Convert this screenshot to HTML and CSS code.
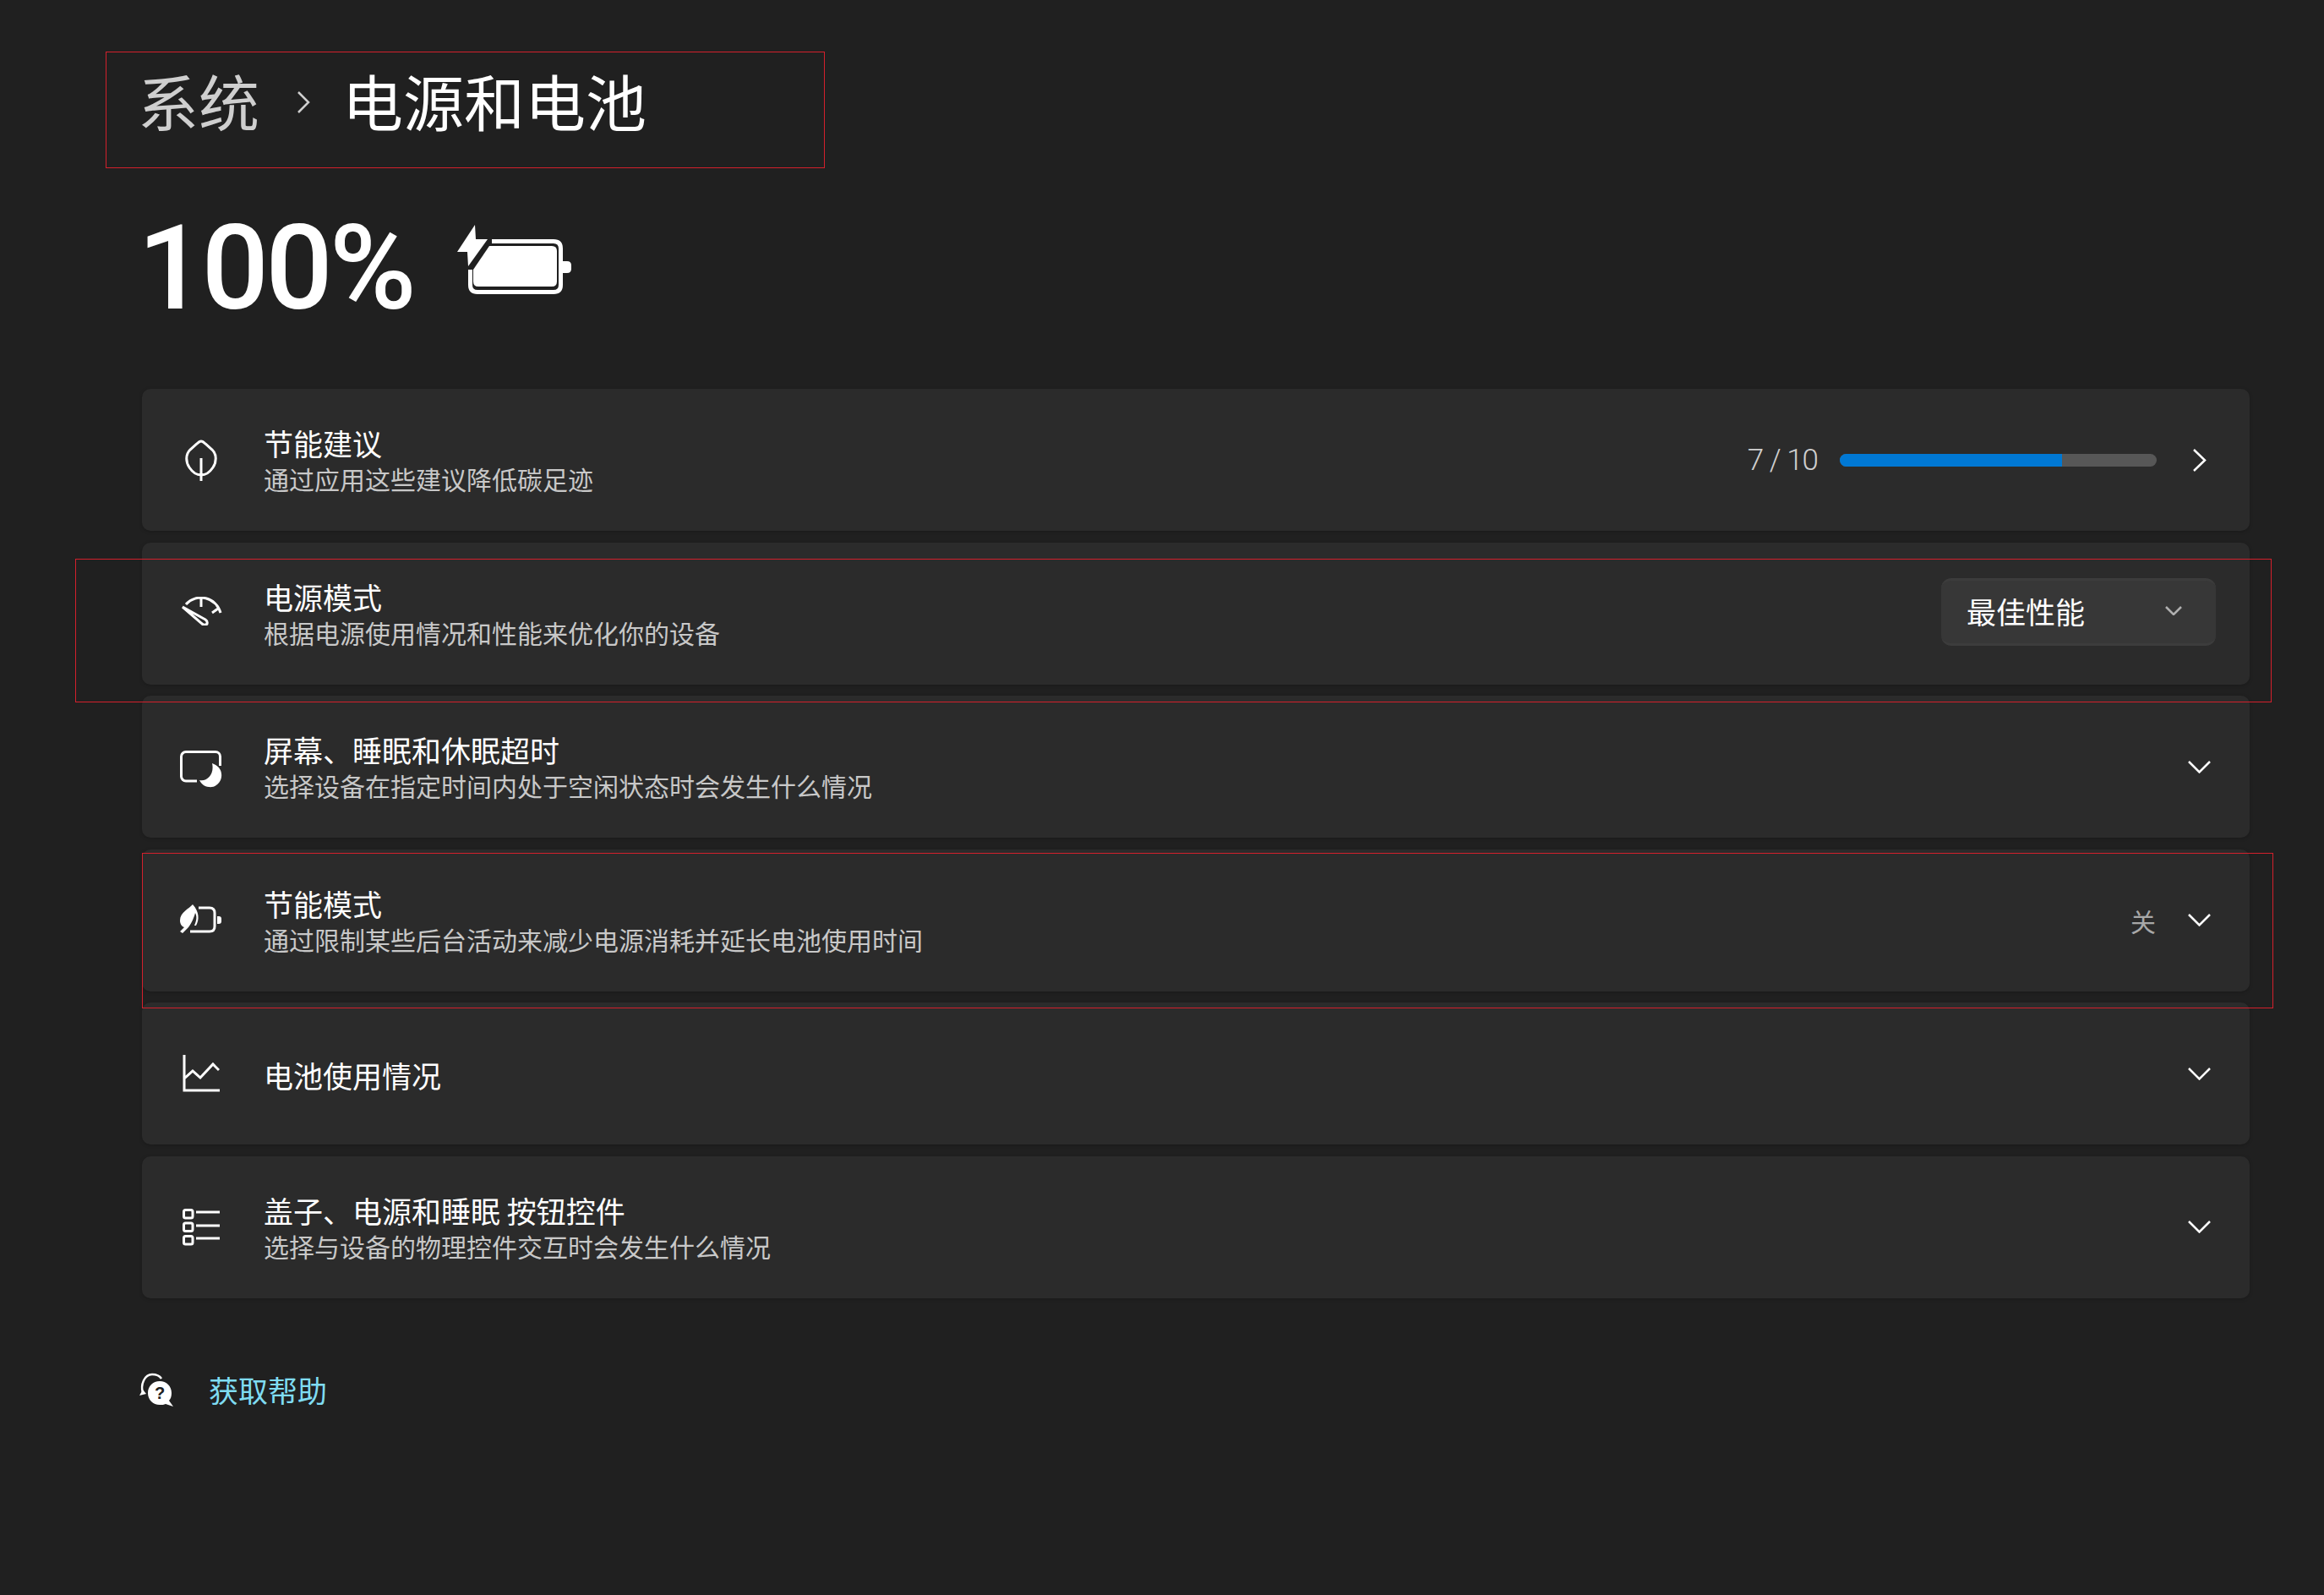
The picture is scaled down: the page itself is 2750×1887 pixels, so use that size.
FILE: index.html
```html
<!DOCTYPE html>
<html lang="zh-CN">
<head>
  <meta charset="UTF-8" />
  <title>电源和电池</title>
  <link rel="stylesheet" href="styles.css">
</head>
<body>

  <div class="page">
    <!-- Breadcrumb -->
    <div class="breadcrumb">
      <span class="crumb-parent">系统</span>
      <svg class="crumb-arrow" viewBox="0 0 16 26"><path d="M2 1 L14 13 L2 25" /></svg>
      <span class="crumb-current">电源和电池</span>
    </div>

    <!-- Battery level -->
    <div class="level">
      <span class="level-value">100%</span>
      <svg class="level-icon" viewBox="0 0 135 82">
        <path class="fill" d="M21 0 L0 32 H12 L13 49 L36 17 H22 Z" />
        <path class="line5" d="M41 19.5 H114 Q122.5 19.5 122.5 28 V71 Q122.5 79.5 114 79.5 H24 Q15.5 79.5 15.5 71 V53" />
        <path class="fill" d="M38 25 H112 Q118 25 118 31 V67 Q118 73 112 73 H25 Q19 73 19 67 V53 Z" />
        <path class="fill" d="M125 43 H130 Q135 43 135 48 V52 Q135 57 130 57 H125 Z" />
      </svg>
    </div>

    <!-- Settings rows -->
    <div class="cards">
      <div class="card">
        <div class="card-icon">
          <svg class="icon-leaf" viewBox="0 0 38 49">
            <path class="line" d="M19 2 C17 2 16 3 14 5 L6 12 C0 18 1 27 5 33 C9 39 14 42 19 42 C24 42 29 39 33 33 C37 27 38 18 32 12 L24 5 C22 3 21 2 19 2 Z M19 22 V49" />
          </svg>
        </div>
        <div class="card-text">
          <div class="card-title">节能建议</div>
          <div class="card-sub">通过应用这些建议降低碳足迹</div>
        </div>
        <div class="card-right">
          <span class="count">7 / 10</span>
          <div class="progress"><div class="progress-bar" style="width: 70%"></div></div>
          <svg class="arrow-right" viewBox="0 0 27 27"><path d="M7 1 L20 13.500 L7 26" /></svg>
        </div>
      </div>

      <div class="card">
        <div class="card-icon">
          <svg class="icon-gauge" viewBox="0 0 50 34">
            <path class="line" d="M7 9 A24 24 0 0 1 48 19 M25 1 V12 M38 19 L45 14" />
            <path class="line" d="M3 12 L30 27 C33 29 33 33 30 33 C28 34 27 33 25 31 Z" />
          </svg>
        </div>
        <div class="card-text">
          <div class="card-title">电源模式</div>
          <div class="card-sub">根据电源使用情况和性能来优化你的设备</div>
        </div>
        <div class="card-right">
          <div class="dropdown">
            <span>最佳性能</span>
            <svg class="dropdown-arrow" viewBox="0 0 20 11"><path d="M1 1 L10 10 L19 1" /></svg>
          </div>
        </div>
      </div>

      <div class="card">
        <div class="card-icon">
          <svg class="icon-screen" viewBox="0 0 50 44">
            <path class="line" d="M20 36 H7 A5.500 5.500 0 0 1 1.500 30.500 V7 A5.500 5.500 0 0 1 7 1.500 H42 A5.500 5.500 0 0 1 47.500 7 V18" />
            <path class="fill" d="M38 15 C46 18 50 24 49 31 C48 39 41 44 34 43 C29 43 25 39 23 35 C32 37 41 28 38 15 Z" />
          </svg>
        </div>
        <div class="card-text">
          <div class="card-title">屏幕、睡眠和休眠超时</div>
          <div class="card-sub">选择设备在指定时间内处于空闲状态时会发生什么情况</div>
        </div>
        <div class="card-right">
          <svg class="arrow-down" viewBox="0 0 27 15"><path d="M1 1 L13.500 13.500 L26 1" /></svg>
        </div>
      </div>

      <div class="card">
        <div class="card-icon">
          <svg class="icon-saver" viewBox="0 0 50 34">
            <path class="fill" d="M15 0 C11 5 0 9 0 19 C0 23 2 26 5 27 L0 32 L3 34 L10 27 C14 22 17 14 18 10 C20 14 20 18 17 25 L19 25 C23 18 23 9 15 0 Z" />
            <path class="line" d="M22 4 H35 Q41 4 41 10 V26 Q41 32 35 32 H12" />
            <path class="fill" d="M44 14 H46 Q49 14 49 17 V20 Q49 23 46 23 H44 Z" />
          </svg>
        </div>
        <div class="card-text">
          <div class="card-title">节能模式</div>
          <div class="card-sub">通过限制某些后台活动来减少电源消耗并延长电池使用时间</div>
        </div>
        <div class="card-right">
          <span class="state">关</span>
          <svg class="arrow-down" viewBox="0 0 27 15"><path d="M1 1 L13.500 13.500 L26 1" /></svg>
        </div>
      </div>

      <div class="card">
        <div class="card-icon">
          <svg class="icon-chart" viewBox="0 0 44 44">
            <path class="line" d="M2 0 V42 H44 M2 28 L12 19 L21 27 L36 11 L43 18" />
          </svg>
        </div>
        <div class="card-text">
          <div class="card-title">电池使用情况</div>
        </div>
        <div class="card-right">
          <svg class="arrow-down" viewBox="0 0 27 15"><path d="M1 1 L13.500 13.500 L26 1" /></svg>
        </div>
      </div>

      <div class="card">
        <div class="card-icon">
          <svg class="icon-list" viewBox="0 0 44 44">
            <rect class="line" x="1.500" y="1.500" width="10.500" height="9.500" rx="2" />
            <rect class="line" x="1.500" y="17" width="10.500" height="9.500" rx="2" />
            <rect class="line" x="1.500" y="32.500" width="10.500" height="9.500" rx="2" />
            <path class="line" d="M16 4 H44 M16 20 H44 M16 35 H44" />
          </svg>
        </div>
        <div class="card-text">
          <div class="card-title">盖子、电源和睡眠 按钮控件</div>
          <div class="card-sub">选择与设备的物理控件交互时会发生什么情况</div>
        </div>
        <div class="card-right">
          <svg class="arrow-down" viewBox="0 0 27 15"><path d="M1 1 L13.500 13.500 L26 1" /></svg>
        </div>
      </div>
    </div>

    <!-- Help link -->
    <div class="help">
      <svg class="help-icon" viewBox="0 0 40 40">
        <path class="line2" d="M4 24 C1 14 6 2 15 2 C20 2 24 4 26 7" />
        <path class="fill" d="M0 27 L8 25 L4 20 Z" />
        <path class="fill" d="M24 10 C32 10 38 16 38 24 C38 28 37 31 35 33 L40 40 L31 37 C29 38 27 38 24 38 C16 38 10 32 10 24 C10 16 16 10 24 10 Z" />
        <text class="help-mark" x="24" y="31">?</text>
      </svg>
      <span class="help-text">获取帮助</span>
    </div>

    <!-- Red annotation frames -->
    <div class="mark mark-title"></div>
    <div class="mark mark-mode"></div>
    <div class="mark mark-saver"></div>
  </div>

</body>
</html>
```

FILE: styles.css
```css
* {
  box-sizing: border-box;
}

body {
  margin: 0;
  background: #202020;
  color: #fff;
  font-family: "Noto Sans CJK SC", sans-serif;
}

.page {
  position: relative;
  width: 2750px;
  height: 1887px;
  padding: 76px 88px 0 163px;
}

svg {
  display: block;
  flex: none;
  fill: none;
}

.line {
  fill: none;
  stroke: #fff;
  stroke-width: 3;
}

.line2 {
  fill: none;
  stroke: #fff;
  stroke-width: 2.500;
}

.line5 {
  fill: none;
  stroke: #fff;
  stroke-width: 5;
}

.fill {
  fill: #fff;
}

.breadcrumb {
  display: flex;
  align-items: center;
  height: 84px;
  font-size: 72px;
  line-height: 84px;
}

.crumb-parent {
  color: #cfcfcf;
}

.crumb-arrow {
  width: 16px;
  height: 26px;
  margin: 6px 38px 0 44px;
}

.crumb-arrow path {
  fill: none;
  stroke: #cfcfcf;
  stroke-width: 2.500;
}

.crumb-current {
  color: #fff;
}

.level {
  display: flex;
  align-items: center;
  height: 120px;
  margin-top: 93px;
}

.level-value {
  width: 330px;
  margin-top: 7px;
  font-family: Roboto, sans-serif;
  font-size: 140px;
  font-weight: 500;
  letter-spacing: -4px;
  line-height: 120px;
  white-space: nowrap;
}

.level-icon {
  width: 135px;
  height: 82px;
  margin-left: 48px;
  margin-top: -12px;
}

.cards {
  display: flex;
  flex-direction: column;
  gap: 13.600px;
  margin-top: 87px;
  margin-left: 5px;
}

.card {
  display: flex;
  align-items: center;
  height: 168px;
  padding: 0 46px 0 42px;
  background: #2b2b2b;
  border-radius: 10px;
  box-shadow: 0 1px 4px rgba(0, 0, 0, 0.22);
}

.card-icon {
  display: flex;
  justify-content: center;
  width: 56px;
  margin-right: 46px;
}

.icon-leaf { width: 38px; height: 49px; }
.icon-gauge { width: 50px; height: 34px; margin-top: -6px; }
.icon-screen { width: 50px; height: 44px; margin-top: 5px; }
.icon-saver { width: 50px; height: 34px; margin-top: -3px; }
.icon-chart { width: 44px; height: 44px; }
.icon-list { width: 44px; height: 44px; }

.card-text {
  flex: 1;
  padding-top: 2px;
}

.card-title {
  font-size: 35px;
  line-height: 43px;
  color: #fff;
}

.card-sub {
  font-size: 30px;
  line-height: 43px;
  color: #c8c8c8;
}

.card-right {
  display: flex;
  align-items: center;
}

.count {
  font-family: Roboto, sans-serif;
  font-size: 35px;
  font-weight: 300;
  letter-spacing: -1px;
  color: #cfcfcf;
}

.progress {
  width: 375px;
  height: 15px;
  margin-left: 26px;
  background: #575757;
  border-radius: 8px;
  overflow: hidden;
}

.progress-bar {
  height: 100%;
  background: #0078d4;
}

.arrow-right {
  width: 27px;
  height: 27px;
  margin-left: 37px;
}

.arrow-right path, .arrow-down path {
  fill: none;
  stroke: #fff;
  stroke-width: 2.500;
}

.arrow-down {
  width: 27px;
  height: 15px;
}

.dropdown {
  display: flex;
  align-items: center;
  justify-content: space-between;
  width: 325px;
  height: 80px;
  margin: -4px -6px 0 0;
  padding: 0 40px 2px 30px;
  background: #373737;
  border-top: 3px solid #3c3c3c;
  border-bottom: 3px solid #3c3c3c;
  border-radius: 12px;
  font-size: 35px;
}

.dropdown-arrow {
  width: 20px;
  height: 11px;
}

.dropdown-arrow path {
  fill: none;
  stroke: #b0b0b0;
  stroke-width: 2.500;
}

.state {
  margin-right: 38px;
  font-size: 30px;
  color: #a8a8a8;
}

.help {
  display: flex;
  align-items: center;
  margin-top: 84px;
}

.help-icon {
  width: 40px;
  height: 40px;
  margin: 0 42px 0 2px;
}

.help-mark {
  fill: #202020;
  font-family: "Liberation Sans", sans-serif;
  font-size: 20px;
  font-weight: bold;
  text-anchor: middle;
}

.help-text {
  font-size: 35px;
  line-height: 48px;
  color: #7fdcf2;
}

.mark {
  position: absolute;
  border: 1px solid #d3202c;
}

.mark-title {
  left: 125px;
  top: 61px;
  width: 851px;
  height: 138px;
}

.mark-mode {
  left: 89px;
  top: 661px;
  width: 2599px;
  height: 170px;
}

.mark-saver {
  left: 168px;
  top: 1009px;
  width: 2522px;
  height: 184px;
}
```
